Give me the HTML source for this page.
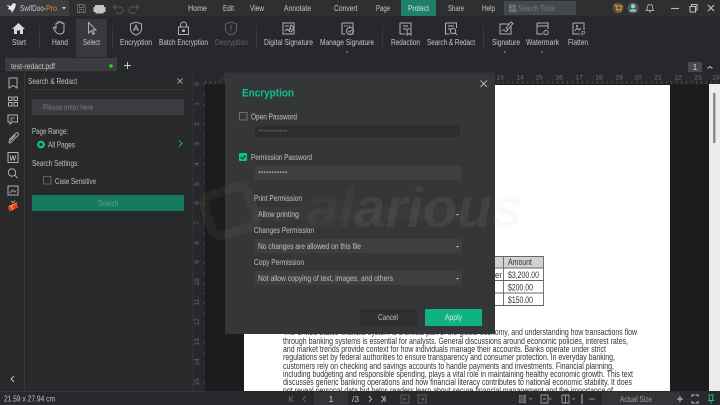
<!DOCTYPE html>
<html><head><meta charset="utf-8"><style>
html,body{margin:0;padding:0;background:#1b1c1e;width:720px;height:405px;overflow:hidden}
svg{display:block;font-family:"Liberation Sans",sans-serif;filter:blur(.3px)}
text{font-size:8.6px;fill:#aeb0b2}
.m{fill:#c6c7c8;font-size:8.6px}
.r{fill:#a9abad;text-anchor:middle}
.n{fill:#6f7173;font-size:6.8px;text-anchor:middle}
.d{fill:#333;font-size:8.9px}
.t{fill:#c0c1c2}
.i{fill:none;stroke:#aeb0b2;stroke-width:1}
.s{fill:none;stroke:#8b8d8f;stroke-width:.9}
</style></head><body>
<svg width="720" height="405" viewBox="0 0 720 405" xmlns="http://www.w3.org/2000/svg">
<defs>
<pattern id="th" x="205" y="81" width="4.96" height="3" patternUnits="userSpaceOnUse"><rect width=".7" height="3" fill="#55575a"/></pattern>
<pattern id="tv" x="203" y="84" width="3" height="9.95" patternUnits="userSpaceOnUse"><rect width="3" height=".7" fill="#4d4f51"/></pattern>
</defs>
<!-- base -->
<rect width="720" height="405" fill="#1b1c1e"/>
<!-- top bar -->
<rect width="720" height="16" fill="#2d2f31"/>
<rect width="69" height="16" fill="#3b3d40"/>
<path d="M6 5l5 1 2-3 3 1-1 4-2 3-1 2-1-3-3-1 1-2z" fill="#e6e6e6"/>
<text x="20" y="11" textLength="26" lengthAdjust="spacingAndGlyphs" class="m">SwifDoo-</text>
<text x="46" y="11" textLength="11" lengthAdjust="spacingAndGlyphs" style="fill:#e08a1e">Pro</text>
<path d="M62 7h4l-2 2.500z" fill="#c8c8c8"/>
<path d="M77.500 4.500h6l2 2v6h-8zM79.500 4.500v3h4v-3M79.500 12.500v-3h4v3" fill="none" stroke="#66686a" stroke-width=".9"/>
<path d="M95 5h9v2h1.500v5h-2v1.500h-8V12h-2V7H95z" fill="#c2c4c6"/>
<path d="M113 7l3-2.500M113 7l3 2.500M113 7h7a3 3 0 0 1 0 6h-4" fill="none" stroke="#55575a"/>
<path d="M139 7l-3-2.500M139 7l-3 2.500M139 7h-7a3 3 0 0 0 0 6h4" fill="none" stroke="#55575a"/>
<text x="188" y="11" textLength="19" lengthAdjust="spacingAndGlyphs" class="m">Home</text>
<text x="223" y="11" textLength="11" lengthAdjust="spacingAndGlyphs" class="m">Edit</text>
<text x="250" y="11" textLength="14" lengthAdjust="spacingAndGlyphs" class="m">View</text>
<text x="284" y="11" textLength="27" lengthAdjust="spacingAndGlyphs" class="m">Annotate</text>
<text x="334" y="11" textLength="23.500" lengthAdjust="spacingAndGlyphs" class="m">Convert</text>
<text x="376" y="11" textLength="14" lengthAdjust="spacingAndGlyphs" class="m">Page</text>
<rect x="401" y="0" width="35" height="16" fill="#1f7f69"/>
<text x="408" y="11" textLength="21" lengthAdjust="spacingAndGlyphs" class="m" style="fill:#d4e5e0">Protect</text>
<text x="448" y="11" textLength="16" lengthAdjust="spacingAndGlyphs" class="m">Share</text>
<text x="482" y="11" textLength="13" lengthAdjust="spacingAndGlyphs" class="m">Help</text>
<rect x="504" y="1" width="72" height="14" fill="#46494b"/>
<path d="M509.500 5h2.500v2.500h-2.500zM509.500 9h2.500v2.500h-2.500zM514 5l1.500 1.200-1.500 1.300zM513.500 9h2.500v2.500h-2.500z" fill="none" stroke="#8e9092" stroke-width=".8"/>
<text x="518" y="11" textLength="37" lengthAdjust="spacingAndGlyphs" style="fill:#75787a">Search Tools</text>
<circle cx="618" cy="8" r="5.500" fill="#54503a"/>
<path d="M614.500 5h1.300l1 4.500h4l1-3.500h-5.500" fill="none" stroke="#e0a030"/><circle cx="617.500" cy="11" r=".8" fill="#e0a030"/><circle cx="620.500" cy="11" r=".8" fill="#e0a030"/>
<circle cx="633" cy="8" r="5.500" fill="#55595b"/>
<circle cx="633" cy="6.200" r="2" fill="#7fe6d0"/><path d="M629.500 11.500c.5-3 6.500-3 7 0z" fill="#7fe6d0"/>
<path d="M646.500 10.500c1-1 .8-2.500 1-4 .4-2.500 4.600-2.500 5 0 .2 1.500 0 3 1 4zM649 12h2" fill="none" stroke="#a8aaac"/>
<path d="M671 8.500h8" stroke="#b4b6b8" stroke-width="1.100"/>
<path d="M690 6.500h5.500v5.500H690zM691.500 6V4.500h5.500v5.500h-1.500" fill="none" stroke="#c2c4c6"/>
<path d="M708 5l6 6M714 5l-6 6" stroke="#c6c8ca" stroke-width="1.100"/>

<!-- ribbon -->
<rect y="16" width="720" height="56" fill="#26282b"/>
<rect x="76" y="19" width="31" height="38" fill="#37393c"/>
<g stroke="#36383b" stroke-width="1"><path d="M39.500 25v25M112.500 25v25M256.500 25v25M382.500 25v25M483.500 25v25"/></g>
<!-- start -->
<path d="M12 29l6.500-6 6.500 6h-2v5h-3v-3.500h-3V34h-3v-5z" fill="#d6d7d8"/>
<!-- hand -->
<path class="i" d="M56 29v-5a1 1 0 0 1 2 0v-1.500a1 1 0 0 1 2 0V23a1 1 0 0 1 2 0v1a1 1 0 0 1 2 0v6c0 2.500-1.500 4-4 4s-3.500-1-4.500-2.500l-2-3c-.6-1 .8-2 1.700-1z"/>
<!-- select -->
<path class="i" d="M88.500 22.500l7.500 7.500h-3.300l1.800 3.700-1.500.8-1.800-3.700-2.700 2.200z"/>
<!-- encryption -->
<path class="i" d="M130.500 24l5.500-2 5.500 2v5c0 3-2.500 5-5.500 6-3-1-5.500-3-5.500-6z"/>
<path class="i" d="M133.500 31l2.500-6 2.500 6M134.500 29h3"/>
<!-- batch -->
<path class="i" d="M178.500 27h10v7.500h-10zM180.500 27v-2a3 3 0 0 1 6 0v2"/><rect x="182" y="29.500" width="3" height="2.500" fill="#b4b6b8"/>
<!-- decryption -->
<path d="M225.500 24l5.500-2 5.500 2v5c0 3-2.500 5-5.500 6-3-1-5.500-3-5.500-6zM231 25v5M231 31.500v1" fill="none" stroke="#5c5e60" stroke-width="1.100"/>
<!-- digital sig -->
<path class="i" d="M283 23h11v11h-11z"/><path d="M285 26h4M285 31l2-2 1.500 1.500 2-2 1 1M291 25l3 3-3 4-2-1z" fill="none" stroke="#b4b6b8" stroke-width=".9"/>
<!-- manage sig -->
<path class="i" d="M342 23h11v11h-3M342 23v11h3"/><path d="M344 26h7" stroke="#b4b6b8" stroke-dasharray="1.500 1"/><circle cx="350" cy="31" r="3.500" class="i"/><path class="i" d="M348.500 31l1 1 2-2"/>
<circle cx="347" cy="52" r=".8" fill="#a0a2a4"/>
<!-- redaction -->
<path class="i" d="M400 23h11v5M400 23v11h5"/><path d="M403 26h5M403 29h3" stroke="#b4b6b8" stroke-width=".9"/><path class="i" d="M407 29h4v6l-2-1.500-2 1.500z"/>
<!-- search redact -->
<path class="i" d="M445.500 23h11v5M445.500 23v11h4"/><path d="M448 26h6M448 29h3" stroke="#b4b6b8" stroke-width=".9"/><circle cx="453" cy="31" r="2.700" class="i"/><path class="i" d="M455 33l2 2"/>
<!-- signature -->
<path class="i" d="M500 24h11v10h-11z"/><path d="M502 31c1.500-2 2-1 3 0s2 0 3-1M506 28l5-6 2 1.500-5 6z" fill="#26282b" stroke="#b4b6b8" stroke-width=".9"/>
<circle cx="505" cy="52" r=".8" fill="#a0a2a4"/>
<!-- watermark -->
<path class="i" d="M537 23h11v6M537 23v11h6M537 26h11"/><circle cx="546" cy="32.500" r="2.200" class="i"/>
<circle cx="542" cy="52" r=".8" fill="#a0a2a4"/>
<!-- flatten -->
<path class="i" d="M573 23h11v7M573 23v11h7"/><path d="M575 31l2-3 2 2 2-2" fill="none" stroke="#b4b6b8" stroke-width=".9"/><circle cx="577" cy="26" r="1" fill="#b4b6b8"/><text x="581" y="36" style="font-size:7px;fill:#b4b6b8">P</text>

<text x="12" y="45" textLength="14" lengthAdjust="spacingAndGlyphs" class="m">Start</text>
<text x="52" y="45" textLength="16" lengthAdjust="spacingAndGlyphs" class="m">Hand</text>
<text x="83" y="45" textLength="17" lengthAdjust="spacingAndGlyphs" class="m">Select</text>
<text x="120" y="45" textLength="32" lengthAdjust="spacingAndGlyphs" class="m">Encryption</text>
<text x="159" y="45" textLength="49" lengthAdjust="spacingAndGlyphs" class="m">Batch Encryption</text>
<text x="215" y="45" textLength="33" lengthAdjust="spacingAndGlyphs" style="fill:#626466">Decryption</text>
<text x="264" y="45" textLength="49" lengthAdjust="spacingAndGlyphs" class="m">Digital Signature</text>
<text x="320" y="45" textLength="54" lengthAdjust="spacingAndGlyphs" class="m">Manage Signature</text>
<text x="391" y="45" textLength="29" lengthAdjust="spacingAndGlyphs" class="m">Redaction</text>
<text x="427" y="45" textLength="48" lengthAdjust="spacingAndGlyphs" class="m">Search &amp; Redact</text>
<text x="492" y="45" textLength="28" lengthAdjust="spacingAndGlyphs" class="m">Signature</text>
<text x="526" y="45" textLength="33" lengthAdjust="spacingAndGlyphs" class="m">Watermark</text>
<text x="568" y="45" textLength="20" lengthAdjust="spacingAndGlyphs" class="m">Flatten</text>

<!-- tab row -->
<rect x="5" y="58" width="112" height="14" fill="#3a3c3f"/>
<text x="11" y="69" textLength="44" lengthAdjust="spacingAndGlyphs" class="m">test-redact.pdf</text>
<circle cx="111" cy="66" r="1.700" fill="#2fd42f"/>
<path d="M127.500 62v7M124 65.500h7" stroke="#c6c8ca" stroke-width="1"/>
<rect x="688" y="62" width="14" height="10" fill="#47494c"/>
<text x="695" y="70" class="r" style="fill:#d0d0d0">1</text>
<path d="M707.500 68.500l2.500-2 2.500 2" fill="none" stroke="#c6c8ca"/>

<!-- top ruler -->
<rect x="205" y="72" width="515" height="12" fill="#26282b"/>
<rect x="205" y="81" width="515" height="3" fill="url(#th)"/>
<text x="224" y="79.500" class="n">-1</text>
<text x="500" y="79.500" class="n">13</text><text x="520" y="79.500" class="n">14</text><text x="539" y="79.500" class="n">15</text><text x="559" y="79.500" class="n">16</text><text x="579" y="79.500" class="n">17</text><text x="599" y="79.500" class="n">18</text><text x="619" y="79.500" class="n">19</text><text x="638" y="79.500" class="n">20</text><text x="658" y="79.500" class="n">21</text><text x="678" y="79.500" class="n">22</text><text x="698" y="79.500" class="n">23</text><text x="716" y="79.500" class="n">24</text>

<!-- sidebar strip + panel -->
<rect y="72" width="193" height="319" fill="#27292b"/>
<rect x="24" y="72" width="1" height="319" fill="#36383a"/>
<rect y="71.500" width="205" height="1" fill="#1f2022"/>
<path class="i" d="M9 78h8v10l-4-2.500-4 2.500z"/>
<path class="i" d="M8.500 97h3.500v3.500H8.500zM14 97h3.500v3.500H14zM8.500 102.500h3.500v3.500H8.500zM14 102.500h3.500v3.500H14z"/>
<path class="i" d="M8 115h9.500v7H12l-2 2v-2H8z"/><path d="M10 118h5M10 120h3" stroke="#b4b6b8" stroke-width=".7"/>
<path class="i" d="M9 140l6.500-6.500c2-2 4 .2 2.200 2.200l-7 7c-1 1-2.300-.3-1.300-1.300l6-6"/>
<path class="i" d="M8 152.500h10v10H8z"/><text x="9.500" y="160.500" style="font-size:7px;font-weight:bold;fill:#b4b6b8">W</text>
<circle cx="12" cy="172.500" r="3.700" class="i"/><path class="i" d="M14.700 175.200l2.800 2.800"/>
<path class="i" d="M8 186h10v9H8z"/><path d="M10 193l2.500-3 2 2 1.500-1.500" fill="none" stroke="#b4b6b8" stroke-width=".8"/>
<path d="M7.500 207l9-4 1.700 4.500-8.500 4z" fill="#e83a2e"/><path d="M9 206.500l8-3.500" stroke="#f0a030" stroke-width="1"/><path d="M11 205l2 5" stroke="#f6c040" stroke-width="1"/><path d="M13 203l-2-2M13 203l2-2.500" stroke="#e8a030" stroke-width="1"/>
<path d="M14 376l-3 3 3 3" fill="none" stroke="#c0c2c4" stroke-width="1"/>

<text x="28" y="84" textLength="49" lengthAdjust="spacingAndGlyphs" class="t">Search &amp; Redact</text>
<path d="M177.500 78.500l5 5M182.500 78.500l-5 5" stroke="#a0a2a4" stroke-width=".9"/>
<rect x="32" y="89" width="152" height="1" fill="#37393b"/>
<rect x="32" y="99" width="152" height="16" fill="#3a3c3f"/>
<text x="43" y="110" textLength="50" lengthAdjust="spacingAndGlyphs" style="fill:#77797b">Please enter here</text>
<text x="32" y="134" textLength="36" lengthAdjust="spacingAndGlyphs" class="t">Page Range:</text>
<circle cx="41" cy="144.500" r="2.800" fill="none" stroke="#0fc58f" stroke-width="2.200"/>
<text x="48" y="147.500" textLength="27" lengthAdjust="spacingAndGlyphs" class="t">All Pages</text>
<path d="M179 140.500l3 3-3 3" fill="none" stroke="#0fb585" stroke-width="1"/>
<text x="32" y="166" textLength="47" lengthAdjust="spacingAndGlyphs" class="t">Search Settings:</text>
<rect x="43.500" y="176.500" width="7.500" height="7.500" fill="none" stroke="#606264" stroke-width="1"/>
<text x="55" y="184" textLength="41" lengthAdjust="spacingAndGlyphs" class="t">Case Sensitive</text>
<rect x="32" y="195" width="152" height="16" fill="#167a5f"/>
<text x="98" y="206" textLength="20" lengthAdjust="spacingAndGlyphs" style="fill:#5ba38f">Search</text>

<!-- left ruler -->
<rect x="193" y="72" width="12" height="319" fill="#26282b"/>
<rect x="192.500" y="72" width="1" height="319" fill="#333537"/>
<rect x="203" y="84" width="2" height="307" fill="url(#tv)"/>
<g>
<text transform="translate(199 84) rotate(-90)" class="n">0</text>
<text transform="translate(199 104) rotate(-90)" class="n">1</text>
<text transform="translate(199 124) rotate(-90)" class="n">2</text>
<text transform="translate(199 144) rotate(-90)" class="n">3</text>
<text transform="translate(199 164) rotate(-90)" class="n">4</text>
<text transform="translate(199 184) rotate(-90)" class="n">5</text>
<text transform="translate(199 203) rotate(-90)" class="n">6</text>
<text transform="translate(199 223) rotate(-90)" class="n">7</text>
<text transform="translate(199 243) rotate(-90)" class="n">8</text>
<text transform="translate(199 262) rotate(-90)" class="n">9</text>
<text transform="translate(199 282) rotate(-90)" class="n">10</text>
<text transform="translate(199 302) rotate(-90)" class="n">11</text>
<text transform="translate(199 322) rotate(-90)" class="n">12</text>
<text transform="translate(199 342) rotate(-90)" class="n">13</text>
<text transform="translate(199 362) rotate(-90)" class="n">14</text>
<text transform="translate(199 382) rotate(-90)" class="n">15</text>
</g>

<!-- page -->
<rect x="244" y="85" width="426" height="306" fill="#fff"/>
<rect x="709" y="84" width="11" height="307" fill="#ececec"/>
<rect x="713" y="93" width="2.500" height="50" fill="#8c8c8c"/>
<!-- table -->
<rect x="440" y="256" width="103.500" height="12" fill="#d2d2d2"/>
<path d="M440 256.500h103.500V305.500H440M440 268h103.500M440 280.500h103.500M440 293h103.500M503.500 256v50" fill="none" stroke="#666" stroke-width=".9"/>
<text x="508" y="265" textLength="24" lengthAdjust="spacingAndGlyphs" class="d">Amount</text>
<text x="495" y="278" textLength="7" lengthAdjust="spacingAndGlyphs" class="d">er</text>
<text x="508" y="278" textLength="31" lengthAdjust="spacingAndGlyphs" class="d">$3,200.00</text>
<text x="508" y="290.500" textLength="25" lengthAdjust="spacingAndGlyphs" class="d">$200.00</text>
<text x="508" y="303" textLength="25" lengthAdjust="spacingAndGlyphs" class="d">$150.00</text>
<!-- body text -->
<text x="283" y="335" textLength="354" lengthAdjust="spacingAndGlyphs" class="d">The United States financial system is a critical part of the global economy, and understanding how transactions flow</text>
<text x="283" y="344" textLength="345" lengthAdjust="spacingAndGlyphs" class="d">through banking systems is essential for analysts. General discussions around economic policies, interest rates,</text>
<text x="283" y="352" textLength="323" lengthAdjust="spacingAndGlyphs" class="d">and market trends provide context for how individuals manage their accounts. Banks operate under strict</text>
<text x="283" y="360" textLength="332" lengthAdjust="spacingAndGlyphs" class="d">regulations set by federal authorities to ensure transparency and consumer protection. In everyday banking,</text>
<text x="283" y="369" textLength="331" lengthAdjust="spacingAndGlyphs" class="d">customers rely on checking and savings accounts to handle payments and investments. Financial planning,</text>
<text x="283" y="377" textLength="350" lengthAdjust="spacingAndGlyphs" class="d">including budgeting and responsible spending, plays a vital role in maintaining healthy economic growth. This text</text>
<text x="283" y="385" textLength="349" lengthAdjust="spacingAndGlyphs" class="d">discusses generic banking operations and how financial literacy contributes to national economic stability. It does</text>
<text x="283" y="393.500" textLength="330" lengthAdjust="spacingAndGlyphs" class="d">not reveal personal data but helps readers learn about secure financial management and the importance of</text>

<!-- dialog -->
<rect x="225" y="72.500" width="270" height="261.500" fill="#343638"/>
<path d="M480.500 80.500l6.500 6.500M487 80.500l-6.500 6.500" stroke="#b4b6b8" stroke-width=".9"/>
<text x="242" y="96.500" textLength="52" lengthAdjust="spacingAndGlyphs" style="font-size:11px;font-weight:bold;fill:#0cc28b">Encryption</text>
<rect x="239.500" y="112.500" width="7.500" height="7.500" fill="none" stroke="#6c6e70" stroke-width="1"/>
<text x="251" y="119.500" textLength="46" lengthAdjust="spacingAndGlyphs" class="t">Open Password</text>
<rect x="255" y="126" width="205" height="11" fill="#2b2d2f"/>
<text x="258" y="134" style="font-size:6.500px;fill:#6c6e70;letter-spacing:.15px">***********</text>
<rect x="239" y="153" width="8" height="8" rx="1" fill="#0cc28b"/>
<path d="M240.500 157l2 2 3-3.500" fill="none" stroke="#1c2a26" stroke-width="1.100"/>
<text x="251" y="160" textLength="61" lengthAdjust="spacingAndGlyphs" class="t">Permission Password</text>
<rect x="254.500" y="166" width="207" height="14" rx="1" fill="#3d3f41"/>
<text x="258" y="175.500" style="font-size:6.500px;fill:#c0c1c2;letter-spacing:.15px">***********</text>

<!-- watermark -->
<g transform="translate(230 211) rotate(-18)"><rect x="-23" y="-21" width="46" height="42" rx="10" fill="none" stroke="#c8a860" stroke-opacity=".07" stroke-width="9"/></g>
<text x="307" y="227" textLength="216" lengthAdjust="spacingAndGlyphs" style="font-size:56px;font-style:italic;font-weight:bold"><tspan style="fill:#c8a860;fill-opacity:.06">al</tspan><tspan style="fill:#b8b8b8;fill-opacity:.09">arious</tspan></text>

<text x="254" y="201" textLength="48" lengthAdjust="spacingAndGlyphs" class="t">Print Permission</text>
<rect x="254.500" y="207" width="207" height="14" fill="#ffffff" fill-opacity=".025"/>
<text x="258" y="217" textLength="41" lengthAdjust="spacingAndGlyphs" class="t">Allow printing</text>
<path d="M456 214h3l-1.500 1.500z" fill="#d0d0d0"/>
<text x="254" y="233" textLength="60" lengthAdjust="spacingAndGlyphs" class="t">Changes Permission</text>
<rect x="254.500" y="239" width="207" height="14" fill="#3d3f41"/>
<text x="258" y="249" textLength="103" lengthAdjust="spacingAndGlyphs" class="t">No changes are allowed on this file</text>
<path d="M456 246h3l-1.500 1.500z" fill="#d0d0d0"/>
<text x="254" y="265" textLength="50" lengthAdjust="spacingAndGlyphs" class="t">Copy Permission</text>
<rect x="254.500" y="271" width="207" height="14" fill="#3d3f41"/>
<text x="258" y="281" textLength="135" lengthAdjust="spacingAndGlyphs" class="t">Not allow copying of text, images, and others</text>
<path d="M456 278h3l-1.500 1.500z" fill="#d0d0d0"/>
<rect x="360" y="309" width="57" height="17" rx="1" fill="#2d2f31"/>
<text x="378" y="320" textLength="20" lengthAdjust="spacingAndGlyphs" class="t">Cancel</text>
<rect x="425" y="309" width="57" height="17" rx="1" fill="#0db383"/>
<text x="445" y="320" textLength="17" lengthAdjust="spacingAndGlyphs" style="fill:#d0efe6">Apply</text>

<!-- status bar -->
<rect y="391" width="720" height="14" fill="#27292c"/>
<rect y="391" width="205" height="1" fill="#36383a"/>
<text x="4" y="401.500" textLength="51" lengthAdjust="spacingAndGlyphs" class="t">21.59 x 27.94 cm</text>
<path d="M289.500 396v6M293 396l-2.500 3 2.500 3M305.500 396l-2.500 3 2.500 3" fill="none" stroke="#5c5e60"/>
<rect x="314" y="392" width="34" height="13" fill="#323437"/>
<text x="331" y="402" class="r" style="fill:#c6c8ca">1</text>
<text x="352" y="402" textLength="7" lengthAdjust="spacingAndGlyphs" class="t">/3</text>
<path d="M369 396l2.500 3-2.500 3M381.500 396l2.500 3-2.500 3M385 396v6" fill="none" stroke="#b0b2b4"/>
<path d="M401 395h8v8h-8zM407 399h-4M404.500 397.500l-1.500 1.500 1.500 1.500" fill="none" stroke="#6a6c6e" stroke-width=".8"/>
<path d="M418 395h8v8h-8zM420 399h4M422.500 397.500l1.500 1.500-1.500 1.500" fill="none" stroke="#6a6c6e" stroke-width=".8"/>
<rect x="519" y="395" width="7" height="8" fill="#7d7f81"/><path d="M519 397h7M519 399h7M519 401h7M521 395v8M523 395v8" stroke="#27292c" stroke-width=".6"/>
<path d="M529 398l1.500 1.500 1.500-1.500M548.500 398l1.500 1.500 1.500-1.500M572 398l1.500 1.500 1.500-1.500" fill="none" stroke="#85878a" stroke-width=".8"/>
<path d="M541 395h7v8h-7zM543 399h3M562 395h7v8h-7zM565.500 395v8" fill="none" stroke="#9a9c9e" stroke-width=".9"/>
<path d="M582 394v10" stroke="#c4c6c8" stroke-width=".9"/>
<path d="M589 399h6" stroke="#8c8e90" stroke-width="1"/>
<rect x="602" y="392" width="78" height="13" fill="#323437"/>
<text x="620" y="402" textLength="32" lengthAdjust="spacingAndGlyphs" class="t" style="fill:#9c9ea0">Actual Size</text>
<path d="M680 396v6M677 399h6" stroke="#c4c6c8" stroke-width="1"/>
<path d="M692 397v-2h2.500M695.500 395h2.500v2M698 401v2h-2.500M694.500 403H692v-2" fill="none" stroke="#c4c6c8" stroke-width=".9"/>
<path d="M709 395h4l-.5 4 1 1.500h-5l1-1.500zM711 400.500v3" fill="none" stroke="#1fc47f" stroke-width=".9"/>
</svg>
</body></html>
